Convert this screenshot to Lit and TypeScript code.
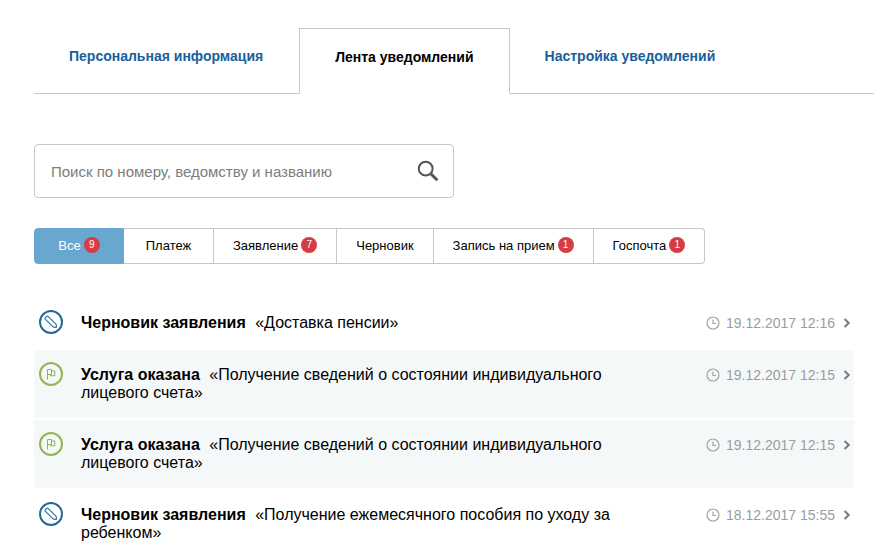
import { LitElement, html, css, svg, nothing } from "lit";
import { customElement, property, state } from "lit/decorators.js";
import { classMap } from "lit/directives/class-map.js";

type Kind = "draft" | "done";

interface Notice {
  kind: Kind;
  status: string;
  name: string;
  date: string;
}

interface Filter {
  label: string;
  count?: number;
}

const TABS = ["Персональная информация", "Лента уведомлений", "Настройка уведомлений"];

const FILTERS: Filter[] = [
  { label: "Все", count: 9 },
  { label: "Платеж" },
  { label: "Заявление", count: 7 },
  { label: "Черновик" },
  { label: "Запись на прием", count: 1 },
  { label: "Госпочта", count: 1 },
];

const NOTICES: Notice[] = [
  { kind: "draft", status: "Черновик заявления", name: "«Доставка пенсии»", date: "19.12.2017 12:16" },
  { kind: "done", status: "Услуга оказана", name: "«Получение сведений о состоянии индивидуального лицевого счета»", date: "19.12.2017 12:15" },
  { kind: "done", status: "Услуга оказана", name: "«Получение сведений о состоянии индивидуального лицевого счета»", date: "19.12.2017 12:15" },
  { kind: "draft", status: "Черновик заявления", name: "«Получение ежемесячного пособия по уходу за ребенком»", date: "18.12.2017 15:55" },
];

const pencil = svg`<path d="M6.2 9.2 Q5.6 8.5 6.2 7.8 L7.6 6.4 Q8.3 5.8 9 6.4 L17.2 14.4 L17.4 17.4 L14.4 17.2 Z" stroke-width="1.1" stroke-linejoin="round"/>`;
const flag = svg`<path d="M8.5 17.5 V7.5 H12.5 V12.5 H8.5 M12.5 9 H15.8 V13.8 H11.6 V12.5" stroke-width="1"/>`;

@customElement("notice-row")
export class NoticeRow extends LitElement {
  @property({ attribute: false }) notice!: Notice;

  static styles = css`
    :host {
      display: block;
    }
    .row {
      display: flex;
      align-items: flex-start;
      padding: 12px 3px 12px 5px;
      color: #000;
      text-decoration: none;
      font-size: 16px;
      line-height: 18px;
    }
    .row.done {
      background: #f5f8f8;
    }
    .icon {
      flex: none;
      width: 24px;
      height: 24px;
      margin-right: 18px;
      fill: none;
      stroke: #256a97;
    }
    .done .icon {
      stroke: #8fb64f;
    }
    .text {
      flex: 1;
      padding: 4px 0;
    }
    .status {
      margin-right: 5px;
    }
    .when {
      flex: none;
      display: flex;
      align-items: center;
      margin-left: 50px;
      padding: 4px 0;
      font-size: 14px;
      color: #9a9d9d;
    }
    .clock {
      width: 14px;
      height: 14px;
      margin-right: 6px;
      fill: none;
      stroke: #a2a5a5;
    }
    .arrow {
      width: 8px;
      height: 10px;
      margin-left: 8px;
      fill: none;
      stroke: #767979;
    }
  `;

  render() {
    const { kind, status, name, date } = this.notice;
    return html`
      <a class=${classMap({ row: true, done: kind === "done" })} href="#">
        <svg class="icon" viewBox="0 0 24 24" aria-hidden="true">
          <circle cx="12" cy="12" r="11" stroke-width="2" />
          ${kind === "draft" ? pencil : flag}
        </svg>
        <span class="text"><b class="status">${status}</b> <span>${name}</span></span>
        <span class="when">
          <svg class="clock" viewBox="0 0 14 14" aria-hidden="true">
            <circle cx="7" cy="7" r="6" stroke-width="1.2" />
            <path d="M7 3.5 V7.5 H10" stroke-width="1.2" />
          </svg>
          <time>${date}</time>
          <svg class="arrow" viewBox="0 0 8 10" aria-hidden="true">
            <path d="M1.5 1 L5.8 5 L1.5 9" stroke-width="1.9" />
          </svg>
        </span>
      </a>
    `;
  }
}

@customElement("app-root")
export class AppRoot extends LitElement {
  @state() private activeTab = 1;
  @state() private activeFilter = 0;

  static styles = css`
    :host {
      display: block;
      padding: 28px 0 0 34px;
      background: #fff;
      color: #000;
      font-family: "Liberation Sans", Arial, sans-serif;
    }
    .tabs {
      display: flex;
    }
    .tabs::after {
      content: "";
      flex: 1;
      border-bottom: 1px solid #c6c8c8;
    }
    .tab {
      box-sizing: border-box;
      padding: 19px 36px 28px 35px;
      border: 1px solid transparent;
      border-width: 1px 0;
      border-bottom-color: #c6c8c8;
      color: #17609a;
      font-size: 14px;
      font-weight: bold;
      line-height: 17px;
      text-decoration: none;
    }
    .tab.active {
      padding: 20px 35px 27px;
      border-width: 1px;
      border-color: #c6c8c8 #c6c8c8 transparent;
      color: #000;
    }
    .search {
      display: flex;
      align-items: center;
      box-sizing: border-box;
      max-width: 420px;
      height: 54px;
      margin: 50px 20px 30px 0;
      border: 1px solid #c6c8c8;
      border-radius: 4px;
    }
    .query {
      flex: 1;
      min-width: 0;
      height: 100%;
      box-sizing: border-box;
      padding: 0 16px;
      border: 0;
      background: none;
      font: 15px "Liberation Sans", Arial, sans-serif;
      outline: none;
    }
    .query::placeholder {
      color: #7b7e7b;
      opacity: 1;
    }
    .find {
      display: flex;
      padding: 4px;
      margin-right: 10px;
      border: 0;
      background: none;
      cursor: pointer;
    }
    .lens {
      width: 22px;
      height: 22px;
      fill: none;
      stroke: #555;
    }
    .filters {
      display: flex;
      margin-bottom: 34px;
    }
    .filter {
      display: flex;
      align-items: center;
      justify-content: center;
      gap: 3px;
      box-sizing: border-box;
      min-width: 90px;
      height: 36px;
      padding: 0 19px 2px;
      border: 1px solid #c6c8c8;
      border-left-width: 0;
      background: #fff;
      color: #000;
      font: 13px "Liberation Sans", Arial, sans-serif;
      white-space: nowrap;
      cursor: pointer;
    }
    .filter:first-child {
      border-left-width: 1px;
      border-radius: 4px 0 0 4px;
    }
    .filter:last-child {
      border-radius: 0 4px 4px 0;
    }
    .filter.active {
      border-color: #67a7d0;
      background: #67a7d0;
      color: #fff;
    }
    .count {
      width: 16px;
      height: 16px;
      border-radius: 50%;
      background: #d63c43;
      color: #fff;
      font-size: 10px;
      line-height: 16px;
      text-align: center;
    }
    .list {
      display: grid;
      gap: 2px;
      margin: 0 20px 0 0;
      padding: 0;
      list-style: none;
    }
  `;

  render() {
    return html`
      <nav class="tabs">
        ${TABS.map(
          (label, i) => html`<a
            class=${classMap({ tab: true, active: i === this.activeTab })}
            href="#"
            aria-current=${i === this.activeTab ? "page" : nothing}
            @click=${() => (this.activeTab = i)}
            >${label}</a
          >`
        )}
      </nav>
      <form class="search" role="search" @submit=${(e: Event) => e.preventDefault()}>
        <input
          class="query"
          type="text"
          aria-label="Поиск по номеру, ведомству и названию"
          placeholder="Поиск по номеру, ведомству и названию"
        />
        <button class="find" type="submit" aria-label="Найти">
          <svg class="lens" viewBox="0 0 22 22" aria-hidden="true">
            <circle cx="8.7" cy="8.7" r="6.9" stroke-width="2" />
            <path d="M13.8 13.8 L20.3 20.3" stroke-width="3" />
          </svg>
        </button>
      </form>
      <div class="filters">
        ${FILTERS.map(
          (f, i) => html`<button
            type="button"
            class=${classMap({ filter: true, active: i === this.activeFilter })}
            aria-pressed=${i === this.activeFilter ? "true" : "false"}
            @click=${() => (this.activeFilter = i)}
          >
            <span>${f.label}</span>${f.count ? html`<span class="count">${f.count}</span>` : nothing}
          </button>`
        )}
      </div>
      <ul class="list">
        ${NOTICES.map((n) => html`<li><notice-row .notice=${n}></notice-row></li>`)}
      </ul>
    `;
  }
}
